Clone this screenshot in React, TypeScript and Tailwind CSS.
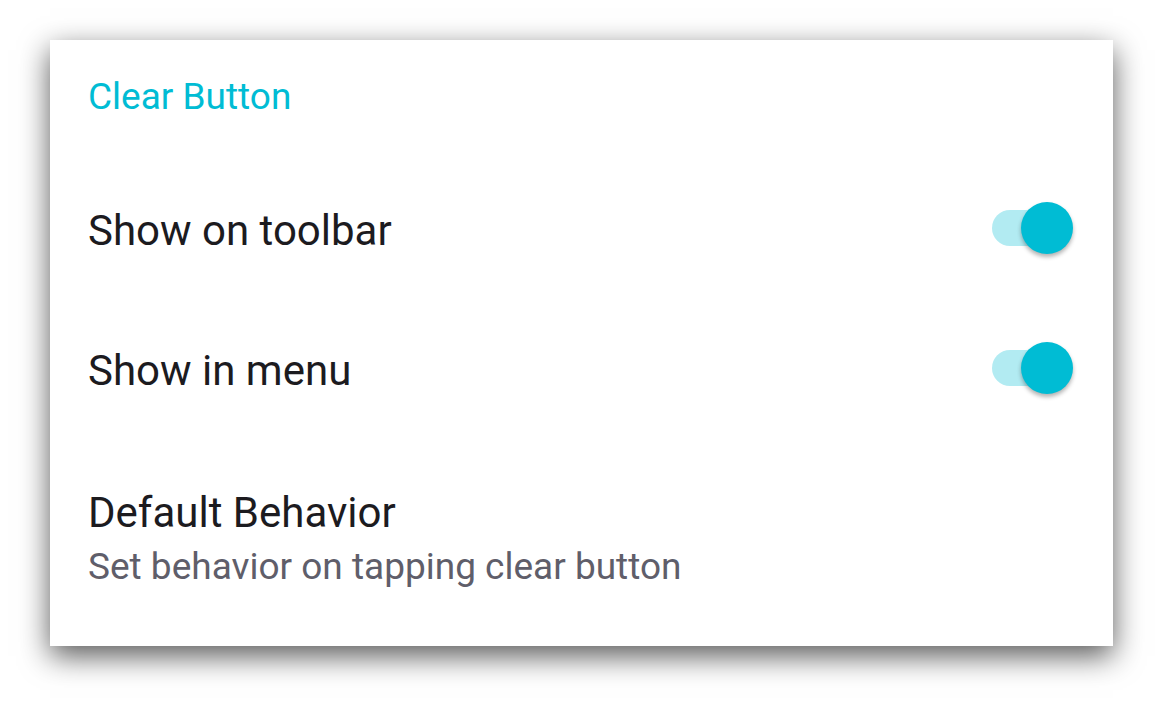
import { useState } from "react";

type ToggleProps = { on: boolean; onChange: (v: boolean) => void };

function Toggle({ on, onChange }: ToggleProps) {
  return (
    <button
      type="button"
      role="switch"
      aria-checked={on}
      onClick={() => onChange(!on)}
      className="relative flex h-[52px] w-[81px] shrink-0 items-center"
    >
      <span
        className={`absolute left-0 h-[36px] w-[76px] rounded-full ${on ? "bg-[#b2ebf2]" : "bg-[#c9c9c9]"}`}
      />
      <span
        className={`absolute top-0 h-[52px] w-[52px] rounded-full shadow-[0_3px_4px_rgba(0,0,0,0.3)] ${on ? "left-[29px] bg-[#00bcd4]" : "left-0 bg-[#f5f5f5]"}`}
      />
    </button>
  );
}

export default function App() {
  const [toolbar, setToolbar] = useState(true);
  const [menu, setMenu] = useState(true);

  return (
    <div className="min-h-screen bg-white pt-[40px] pl-[50px] font-['Roboto',sans-serif]">
      <div className="w-[1063px] h-[606px] bg-white shadow-[0_10px_28px_rgba(0,0,0,0.65)]">
        <div className="pl-[38px] pr-[40px]">
          <h2 className="h-[112px] flex items-center pt-[1px] text-[37px] text-[#00bcd4]">Clear Button</h2>

          <div className="h-[140px] mt-[6px] flex items-center justify-between">
            <span className="pt-[4px] text-[42px] text-[#1c1b1f]">Show on toolbar</span>
            <Toggle on={toolbar} onChange={setToolbar} />
          </div>

          <div className="h-[140px] flex items-center justify-between">
            <span className="pt-[4px] text-[42px] text-[#1c1b1f]">Show in menu</span>
            <Toggle on={menu} onChange={setMenu} />
          </div>

          <div className="flex flex-col pt-[48px]">
            <span className="text-[42px] leading-[54px] text-[#1c1b1f]">Default Behavior</span>
            <span className="text-[37px] leading-[54px] text-[#5f5e6a]">Set behavior on tapping clear button</span>
          </div>
        </div>
      </div>
    </div>
  );
}
